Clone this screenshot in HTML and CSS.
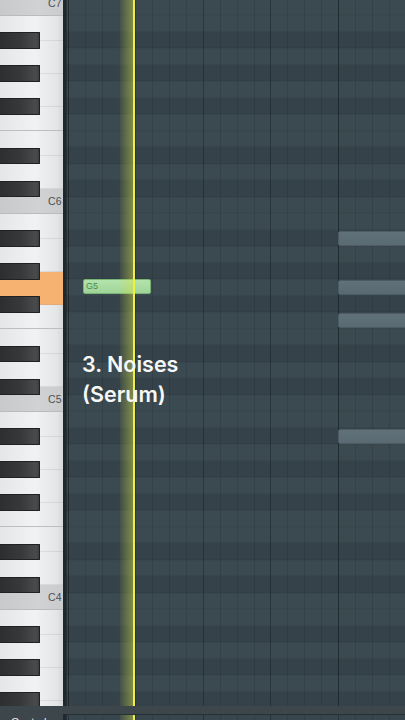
FILE: index.html
```html
<!DOCTYPE html>
<html>
<head>
<meta charset="utf-8">
<link rel="stylesheet" href="styles.css">
</head>
<body>
<div class="app">
  <div class="roll">
    <div class="keys">
      <div class="wk c first"><span class="name">C7</span></div>
      <div class="wk b"></div>
      <div class="wk a"><span class="blk"></span></div>
      <div class="wk g"><span class="blk"></span></div>
      <div class="wk f"><span class="blk"></span></div>
      <div class="wk e"></div>
      <div class="wk d"><span class="blk"></span></div>
      <div class="wk c"><span class="blk"></span><span class="name">C6</span></div>
      <div class="wk b"></div>
      <div class="wk a"><span class="blk"></span></div>
      <div class="wk g hl"><span class="blk"></span></div>
      <div class="wk f"><span class="blk"></span></div>
      <div class="wk e"></div>
      <div class="wk d"><span class="blk"></span></div>
      <div class="wk c"><span class="blk"></span><span class="name">C5</span></div>
      <div class="wk b"></div>
      <div class="wk a"><span class="blk"></span></div>
      <div class="wk g"><span class="blk"></span></div>
      <div class="wk f"><span class="blk"></span></div>
      <div class="wk e"></div>
      <div class="wk d"><span class="blk"></span></div>
      <div class="wk c"><span class="blk"></span><span class="name">C4</span></div>
      <div class="wk b"></div>
      <div class="wk a"><span class="blk"></span></div>
      <div class="wk g"><span class="blk"></span></div>
      <div class="wk f"><span class="blk"></span></div>
    </div>
    <div class="divider"></div>
    <div class="grid">
      <div class="note gray" style="left:272px;top:231px"></div>
      <div class="note gray" style="left:272px;top:280px"></div>
      <div class="note gray" style="left:272px;top:313px"></div>
      <div class="note gray" style="left:272px;top:429px"></div>
      <div class="note green" style="left:17px;top:279px">G5</div>
      <div class="glow"></div>
      <div class="playhead"></div>
      <div class="caption">3. Noises<br>(Serum)</div>
    </div>
  </div>
  <div class="lower">
    <div class="strip"></div>
    <div class="events">
      <div class="ev-label">Control</div>
      <div class="divider"></div>
      <div class="ev-grid">
        <div class="glow"></div>
        <div class="playhead"></div>
      </div>
    </div>
  </div>
</div>
</body>
</html>
```
FILE: styles.css
```css
html, body {
  margin: 0;
  padding: 0;
  width: 405px;
  height: 720px;
  overflow: hidden;
  background: #3c464b;
  font-family: "Liberation Sans", Arial, sans-serif;
}

.app {
  display: flex;
  flex-direction: column;
  width: 405px;
  height: 720px;
  overflow: hidden;
}

.roll {
  display: flex;
  flex: none;
  height: 706px;
  overflow: hidden;
}

/* ---------- piano keyboard ---------- */
.keys {
  width: 63px;
  flex: none;
  display: flex;
  flex-direction: column;
  overflow: hidden;
  background: #e9ebed;
}

.wk {
  position: relative;
  flex: none;
  box-sizing: border-box;
  display: flex;
  align-items: center;
  justify-content: flex-end;
  padding-right: 1.5px;
  background: linear-gradient(to right, #e4e6e8 0%, #f1f2f3 55%, #e3e5e7 90%, #d6d8da 100%);
  border-bottom: 1px solid rgba(150, 155, 160, 0.2);
}

.wk.first { margin-top: -9px; }

.wk.c, .wk.e, .wk.f, .wk.b { height: 24.75px; }
.wk.d, .wk.g, .wk.a { height: 33px; }

.wk.c {
  background: linear-gradient(to right, #c7c9cb 0%, #d0d2d4 60%, #c9cbcd 100%);
  border-bottom: 1px solid #b9bbbd;
}
.wk.f { border-bottom: 1px solid #bcbfc2; }

.wk.hl {
  background: #f6b271;
}

.blk {
  position: absolute;
  left: 0;
  top: -8.25px;
  width: 40px;
  height: 16.5px;
  box-sizing: border-box;
  z-index: 1;
  background: linear-gradient(to right, #2d2e2f 0%, #38393a 55%, #4a4b4d 92%, #3c3d3e 100%);
  border: 1px solid #202122;
  border-left: 0;
  border-radius: 0 1px 1px 0;
}

.name {
  font-size: 10.5px;
  line-height: 1;
  color: #4d5053;
}

.divider {
  width: 3px;
  flex: none;
  background: #1f282c;
}

/* ---------- note grid ---------- */
.grid {
  position: relative;
  flex: 1;
  overflow: hidden;
  background:
    repeating-linear-gradient(to right, rgba(10,18,22,0.25) 0 1px, transparent 1px 270px) 2px 0 / 100% 100%,
    repeating-linear-gradient(to right, rgba(10,18,22,0.26) 0 1px, transparent 1px 67.5px) 2px 0 / 100% 100%,
    repeating-linear-gradient(to right, rgba(10,18,22,0.14) 0 1px, transparent 1px 16.875px) 2px 0 / 100% 100%,
    repeating-linear-gradient(to bottom, transparent 0 15.5px, rgba(10,18,22,0.09) 15.5px 16.5px) 0 -0.75px / 100% 198px,
    linear-gradient(to bottom,
      #3b4950 0 33px, #354249 33px 49.5px, #3b4950 49.5px 66px, #354249 66px 82.5px,
      #3b4950 82.5px 99px, #354249 99px 115.5px, #3b4950 115.5px 148.5px, #354249 148.5px 165px,
      #3b4950 165px 181.5px, #354249 181.5px 198px) 0 -0.75px / 100% 198px;
}

.note {
  position: absolute;
  height: 15px;
  box-sizing: border-box;
  border-radius: 2px;
}

.note.gray {
  width: 80px;
  background: linear-gradient(to bottom, #617179, #5a6a72);
  border: 1px solid #4d5c64;
}

.note.green {
  width: 68px;
  background: linear-gradient(to bottom, #b3e3ac, #9fd499);
  border: 1px solid #79b374;
  font-family: "Liberation Sans", Arial, sans-serif;
  font-size: 9px;
  line-height: 13px;
  color: #4a8847;
  padding-left: 2px;
}

.glow {
  position: absolute;
  top: 0;
  bottom: 0;
  left: 52px;
  width: 15px;
  background: linear-gradient(to right, rgba(215, 225, 60, 0), rgba(215, 225, 60, 0.45));
  pointer-events: none;
}

.playhead {
  position: absolute;
  top: 0;
  bottom: 0;
  left: 67px;
  width: 2px;
  background: #eef045;
}

.caption {
  position: absolute;
  left: 16px;
  top: 349px;
  font-family: Inter, "Open Sans", sans-serif;
  font-weight: 600;
  font-size: 21.5px;
  line-height: 30px;
  color: #f6f7f7;
  z-index: 2;
}

/* ---------- lower event area ---------- */
.lower {
  flex: 1;
  min-height: 0;
  display: flex;
  flex-direction: column;
  overflow: hidden;
  background: #3c464b;
}

.strip {
  height: 8px;
  flex: none;
}

.events {
  flex: 1;
  min-height: 0;
  display: flex;
  overflow: hidden;
}

.ev-label {
  width: 63px;
  flex: none;
  overflow: hidden;
  box-sizing: border-box;
  padding: 3px 0 0 11px;
  font-size: 11px;
  line-height: 11px;
  color: #eef0f1;
}

.ev-grid {
  position: relative;
  flex: 1;
  border-top: 1px solid #253035;
  background:
    repeating-linear-gradient(to right, rgba(10,18,22,0.26) 0 1px, transparent 1px 67.5px) 2px 0 / 100% 100%,
    repeating-linear-gradient(to right, rgba(10,18,22,0.14) 0 1px, transparent 1px 16.875px) 2px 0 / 100% 100%,
    #38464d;
}
```
